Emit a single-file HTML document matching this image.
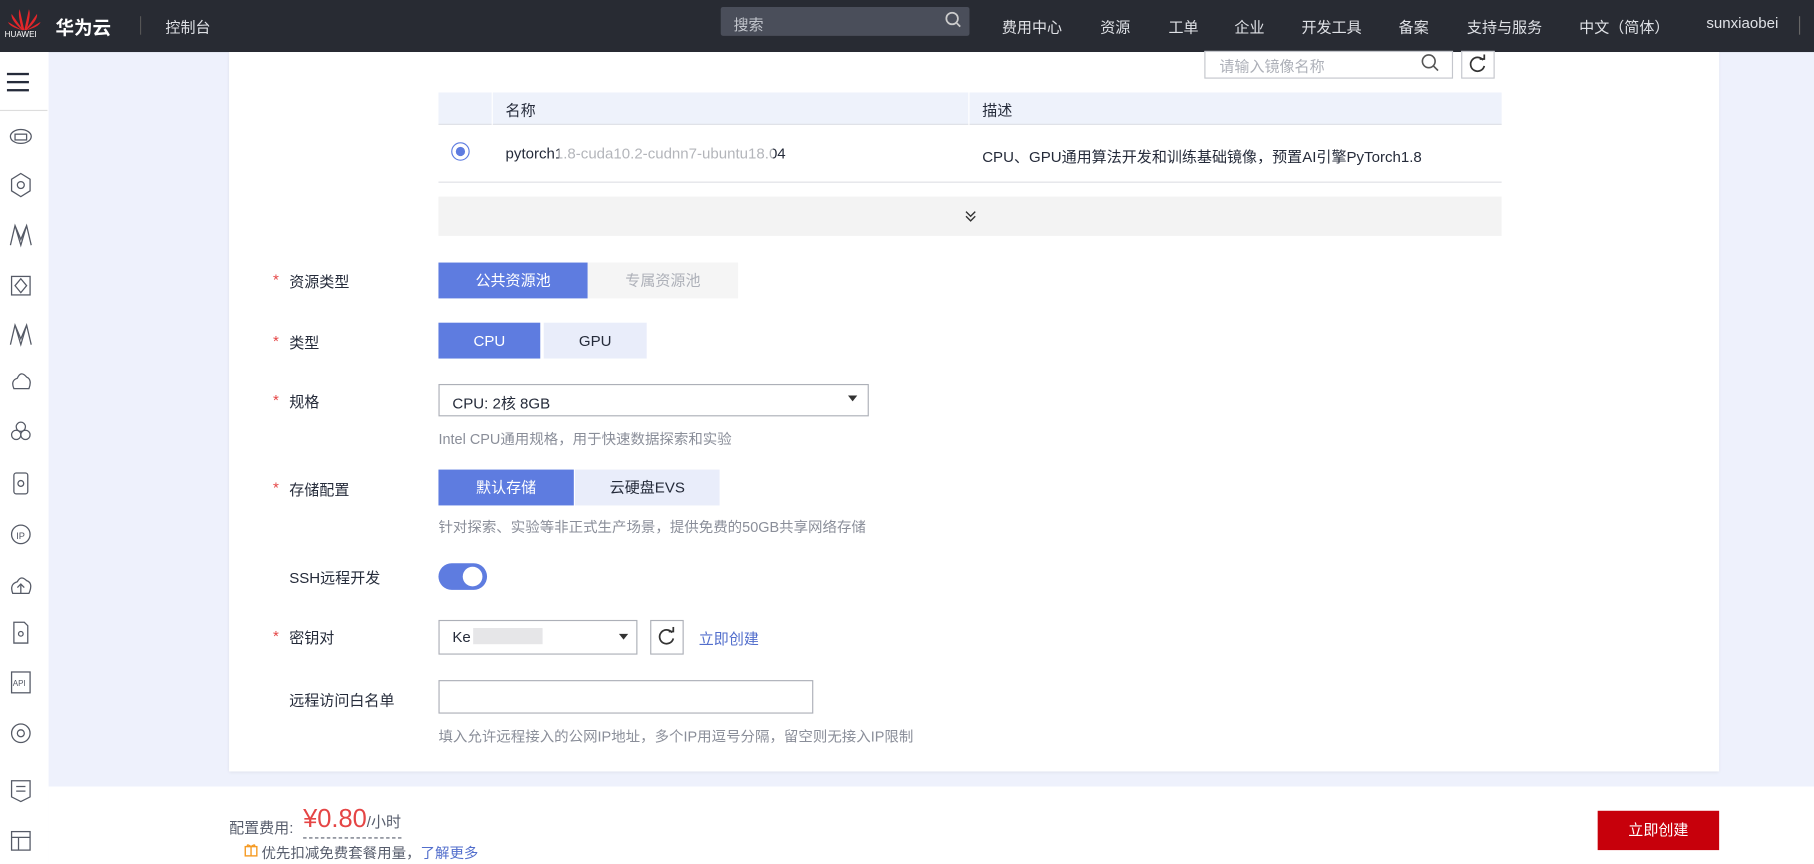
<!DOCTYPE html>
<html><head><meta charset="utf-8">
<style>
*{margin:0;padding:0;box-sizing:border-box}
html,body{width:1814px;height:864px;overflow:hidden;background:#fff}
body{font-family:"Liberation Sans","Noto Sans CJK SC",sans-serif;color:#252b3a}
#s{position:absolute;left:0;top:0;width:1568px;height:747px;transform:scale(1.15689,1.1566);transform-origin:0 0;font-size:13px;background:#eef1fc;overflow:hidden}
.a{position:absolute}
.top{left:0;top:0;width:1568px;height:45px;background:#282b33;color:#fff}
.nav{top:13px;font-size:13px;color:#dfe1e6}
.card{left:198px;top:45px;width:1288px;height:622px;background:#fff;box-shadow:0 1px 3px rgba(0,0,0,.08)}
.lbl{font-size:13px;color:#252b3a}
.star{color:#e54545;font-size:13px}
.btn{height:31px;line-height:31px;text-align:center;font-size:13px}
.on{background:#5e7ce0;color:#fff}
.off{background:#e9edfa;color:#252b3a}
.hint{color:#8a8e99;font-size:12.5px}
.box{border:1px solid #adb0b8;background:#fff}
.side{left:0;top:45px;width:42px;height:702px;background:#fff}
</style></head><body><div id="s">
<div class="a top">
 <svg class="a" style="left:6px;top:6px" width="30" height="22" viewBox="0 0 30 22"><g fill="#e3262a"><path d="M15 20 L11 2 Q9 6 13 20Z"/><path d="M15 20 L19 2 Q21 6 17 20Z"/><path d="M14 20 L4 6 Q3 11 13 20Z"/><path d="M16 20 L26 6 Q27 11 17 20Z"/><path d="M13 20 L1 13 Q2 17 13 20Z"/><path d="M17 20 L29 13 Q28 17 17 20Z"/></g></svg>
 <div class="a" style="left:4px;top:27px;font-size:7px;color:#fff">HUAWEI</div>
 <div class="a" style="left:48px;top:11px;font-size:16px;font-weight:bold">华为云</div>
 <div class="a" style="left:121px;top:14px;width:1px;height:16px;background:#555"></div>
 <div class="a" style="left:143px;top:13px;font-size:13px;color:#dfe1e6">控制台</div>
 <div class="a" style="left:623px;top:6px;width:215px;height:25px;background:#4a4e5a;border-radius:2px"></div>
 <div class="a" style="left:634px;top:11px;font-size:13px;color:#c2c5cc">搜索</div>
 <svg class="a" style="left:817px;top:10px" width="14" height="14" viewBox="0 0 14 14"><circle cx="6" cy="6" r="5" fill="none" stroke="#ccc" stroke-width="1.5"/><path d="M10 10 L13 13" stroke="#ccc" stroke-width="1.5"/></svg>
 <div class="a nav" style="left:866px">费用中心</div>
 <div class="a nav" style="left:951px">资源</div>
 <div class="a nav" style="left:1010px">工单</div>
 <div class="a nav" style="left:1067px">企业</div>
 <div class="a nav" style="left:1125px">开发工具</div>
 <div class="a nav" style="left:1209px">备案</div>
 <div class="a nav" style="left:1268px">支持与服务</div>
 <div class="a nav" style="left:1365px">中文（简体）</div>
 <div class="a nav" style="left:1475px;top:12px">sunxiaobei</div>
 <div class="a" style="left:1555px;top:14px;width:1px;height:16px;background:#666"></div>
</div>
<div class="a side">
 <div class="a" style="left:6px;top:18px;width:19px;height:2px;background:#252b3a;box-shadow:0 7px 0 #252b3a,0 14px 0 #252b3a"></div>
 <div class="a" style="left:0;top:50px;width:41px;height:1px;background:#ddd"></div>
 <svg class="a" style="left:7px;top:62px" width="22" height="640" viewBox="0 0 22 640" fill="none" stroke="#555a66" stroke-width="1.1">
  <ellipse cx="11" cy="11" rx="9" ry="6"/><rect x="6" y="9" width="10" height="5"/>
  <path d="M11 43 L19 48 L19 58 L11 63 L3 58 L3 48Z"/><circle cx="11" cy="53" r="3"/>
  <path d="M2 105 L6 88 L11 100 L16 88 L20 105 M6 88 L11 105 L16 88"/>
  <rect x="3" y="132" width="16" height="16"/><path d="M11 134 L16 140 L11 146 L6 140Z"/>
  <path d="M2 191 L6 174 L11 186 L16 174 L20 191 M6 174 L11 191 L16 174"/>
  <path d="M5 229 Q2 222 8 220 Q11 213 16 219 Q21 221 18 229Z"/>
  <circle cx="11" cy="262" r="4"/><circle cx="7" cy="269" r="4"/><circle cx="15" cy="269" r="4"/>
  <rect x="5" y="302" width="12" height="18" rx="2"/><circle cx="11" cy="311" r="2.5"/>
  <circle cx="11" cy="355" r="8"/><text x="7" y="359" font-size="8" fill="#555a66" stroke="none">IP</text>
  <path d="M4 406 Q1 398 8 396 Q11 390 16 395 Q22 397 18 406Z"/><path d="M11 406 L11 399 M8 401 L11 398 L14 401"/>
  <path d="M5 431 L14 431 L17 434 L17 449 L5 449Z"/><circle cx="11" cy="441" r="2"/>
  <rect x="3" y="474" width="16" height="18"/><text x="4" y="486" font-size="7" fill="#555a66" stroke="none">API</text>
  <circle cx="11" cy="527" r="8"/><circle cx="11" cy="527" r="3"/>
  <path d="M3 568 L19 568 L19 582 L11 586 L3 582Z"/><path d="M7 573 L15 573 M7 577 L15 577"/>
  <rect x="3" y="612" width="16" height="16"/><path d="M3 617 L19 617 M9 617 L9 628"/>
 </svg>
</div>
<div class="a card">
 <div class="a box" style="left:843px;top:-1px;width:215px;height:24px;border-color:#c4c6cc"></div>
 <div class="a" style="left:856px;top:2px;color:#adb0b8">请输入镜像名称</div>
 <svg class="a" style="left:1030px;top:1px" width="16" height="16" viewBox="0 0 16 16"><circle cx="7" cy="7" r="5.5" fill="none" stroke="#555" stroke-width="1.4"/><path d="M11 11 L15 15" stroke="#555" stroke-width="1.4"/></svg>
 <div class="a box" style="left:1065px;top:-1px;width:29px;height:24px;border-color:#c4c6cc"></div>
 <svg class="a" style="left:1071px;top:2px" width="17" height="17" viewBox="0 0 17 17"><path d="M13 5 A6 6 0 1 0 14 10" fill="none" stroke="#333" stroke-width="1.5"/><path d="M10 4 L14 4 L14 0" fill="none" stroke="#333" stroke-width="1.5"/></svg>
 <div class="a" style="left:181px;top:35px;width:919px;height:28px;background:#eef2fb;border-bottom:1px solid #dfe1e6"></div>
 <div class="a" style="left:227px;top:35px;width:1px;height:28px;background:#fff"></div>
 <div class="a" style="left:639px;top:35px;width:1px;height:28px;background:#fff"></div>
 <div class="a" style="left:239px;top:40px">名称</div>
 <div class="a" style="left:651px;top:40px">描述</div>
 <div class="a" style="left:181px;top:112px;width:919px;height:1px;background:#dfe1e6"></div>
 <div class="a" style="left:192px;top:78px;width:16px;height:16px;border:1px solid #5e7ce0;border-radius:50%"></div>
 <div class="a" style="left:196px;top:82px;width:8px;height:8px;background:#5e7ce0;border-radius:50%"></div>
 <div class="a" style="left:239px;top:80px">pytorch1.8-cuda10.2-cudnn7-ubuntu18.04</div>
 <div class="a" style="left:285px;top:78px;width:185px;height:18px;background:rgba(255,255,255,.65)"></div>
 <div class="a" style="left:651px;top:80px">CPU、GPU通用算法开发和训练基础镜像，预置AI引擎PyTorch1.8</div>
 <div class="a" style="left:181px;top:125px;width:919px;height:34px;background:#f3f3f3"></div>
 <svg class="a" style="left:635px;top:136px" width="12" height="12" viewBox="0 0 12 12" fill="none" stroke="#333" stroke-width="1.2"><path d="M2 2 L6 6 L10 2 M2 6 L6 10 L10 6"/></svg>

 <div class="a star" style="left:38px;top:189px">*</div><div class="a lbl" style="left:52px;top:188px">资源类型</div>
 <div class="a btn on" style="left:181px;top:182px;width:129px">公共资源池</div>
 <div class="a btn" style="left:310px;top:182px;width:130px;background:#f5f5f5;color:#adb0b8">专属资源池</div>

 <div class="a star" style="left:38px;top:242px">*</div><div class="a lbl" style="left:52px;top:241px">类型</div>
 <div class="a btn on" style="left:181px;top:234px;width:88px">CPU</div>
 <div class="a btn off" style="left:272px;top:234px;width:89px">GPU</div>

 <div class="a star" style="left:38px;top:293px">*</div><div class="a lbl" style="left:52px;top:292px">规格</div>
 <div class="a box" style="left:181px;top:287px;width:372px;height:28px"></div>
 <div class="a" style="left:193px;top:293px">CPU: 2核 8GB</div>
 <div class="a" style="left:535px;top:297px;border-left:4px solid transparent;border-right:4px solid transparent;border-top:5px solid #333"></div>
 <div class="a hint" style="left:181px;top:324px">Intel CPU通用规格，用于快速数据探索和实验</div>

 <div class="a star" style="left:38px;top:369px">*</div><div class="a lbl" style="left:52px;top:368px">存储配置</div>
 <div class="a btn on" style="left:181px;top:361px;width:117px">默认存储</div>
 <div class="a btn off" style="left:299px;top:361px;width:125px">云硬盘EVS</div>
 <div class="a hint" style="left:181px;top:400px">针对探索、实验等非正式生产场景，提供免费的50GB共享网络存储</div>

 <div class="a lbl" style="left:52px;top:444px">SSH远程开发</div>
 <div class="a" style="left:181px;top:442px;width:42px;height:23px;background:#5e7ce0;border-radius:12px"></div>
 <div class="a" style="left:202px;top:445px;width:17px;height:17px;background:#fff;border-radius:50%"></div>

 <div class="a star" style="left:38px;top:497px">*</div><div class="a lbl" style="left:52px;top:496px">密钥对</div>
 <div class="a box" style="left:181px;top:491px;width:172px;height:30px"></div>
 <div class="a" style="left:193px;top:498px">Ke</div>
 <div class="a" style="left:211px;top:498px;width:60px;height:14px;background:#e6e6e8"></div>
 <div class="a" style="left:337px;top:503px;border-left:4px solid transparent;border-right:4px solid transparent;border-top:5px solid #333"></div>
 <div class="a box" style="left:364px;top:491px;width:29px;height:30px"></div>
 <svg class="a" style="left:370px;top:497px" width="17" height="17" viewBox="0 0 17 17"><path d="M13 5 A6 6 0 1 0 14 10" fill="none" stroke="#333" stroke-width="1.5"/><path d="M10 4 L14 4 L14 0" fill="none" stroke="#333" stroke-width="1.5"/></svg>
 <div class="a" style="left:406px;top:497px;color:#526ecc">立即创建</div>

 <div class="a lbl" style="left:52px;top:550px">远程访问白名单</div>
 <div class="a box" style="left:181px;top:543px;width:324px;height:29px"></div>
 <div class="a hint" style="left:181px;top:581px">填入允许远程接入的公网IP地址，多个IP用逗号分隔，留空则无接入IP限制</div>
</div>
<div class="a" style="left:42px;top:680px;width:1526px;height:67px;background:#fff"></div>
<div class="a" style="left:198px;top:705px;font-size:13px;color:#575d6c">配置费用:</div>
<div class="a" style="left:262px;top:695px;font-size:22px;color:#e54545;border-bottom:1px dashed #575d6c;line-height:26px">¥0.80<span style="font-size:13px;color:#575d6c">/小时</span></div>
<svg class="a" style="left:211px;top:728px" width="12" height="13" viewBox="0 0 12 13" fill="none" stroke="#f59a23" stroke-width="1.2"><rect x="1" y="4" width="10" height="8"/><path d="M6 4 L6 12 M3 4 Q2 1 6 4 Q10 1 9 4"/></svg>
<div class="a" style="left:226px;top:727px;font-size:12.5px;color:#575d6c">优先扣减免费套餐用量，<span style="color:#526ecc">了解更多</span></div>
<div class="a" style="left:1381px;top:701px;width:105px;height:34px;background:#c7000b;color:#fff;text-align:center;line-height:34px;font-size:13px">立即创建</div>
</div></body></html>
